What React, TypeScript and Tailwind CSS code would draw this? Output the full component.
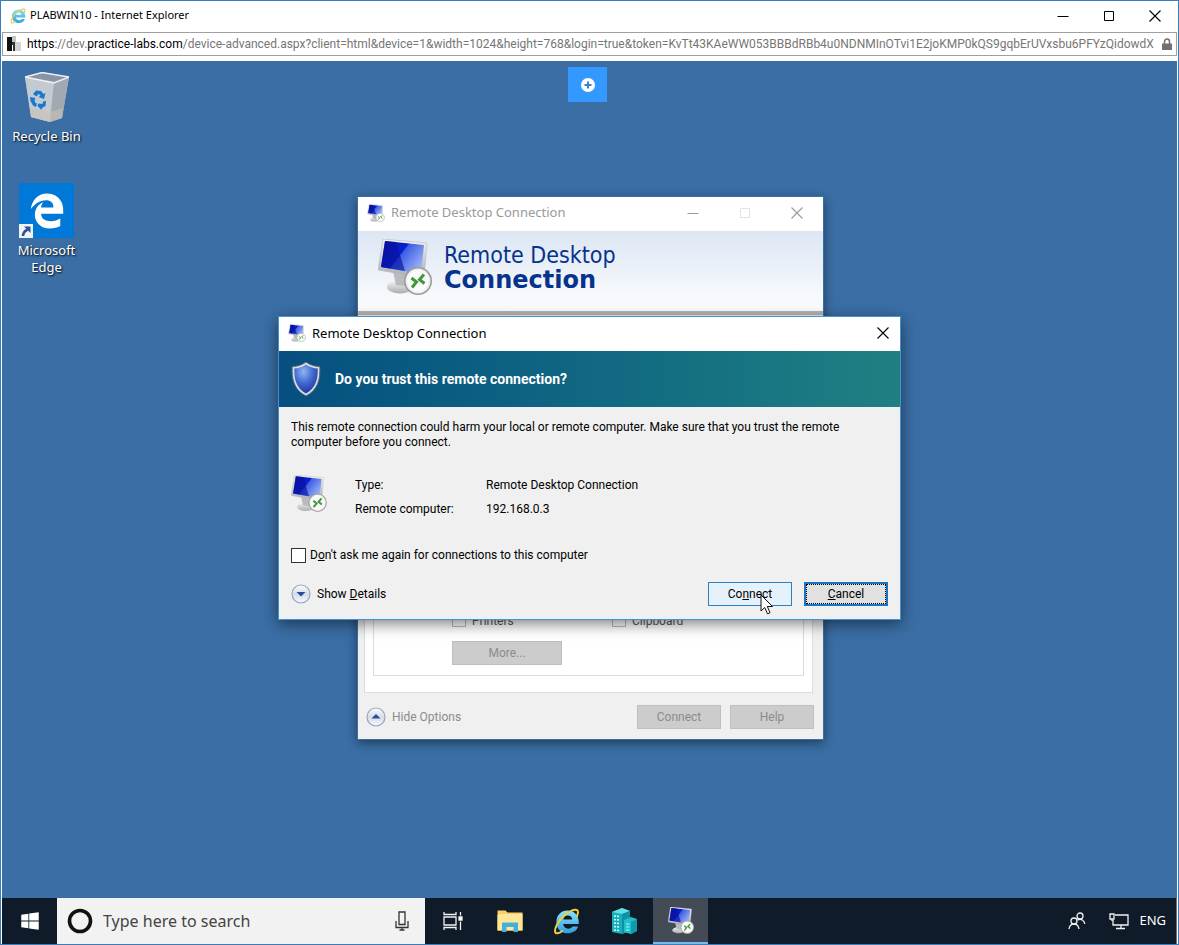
import React from 'react';
import { FaEdgeLegacy, FaWindows } from 'react-icons/fa';

const UI_FONT = "font-['Noto_Sans','Open_Sans',sans-serif]";
const DIALOG_FONT = "font-[Roboto,'Liberation_Sans',sans-serif]";

const RdcIcon: React.FC<{ id: string; className?: string }> = ({ id, className }) => (
  <svg viewBox="0 0 54 56" className={className} aria-hidden="true">
    <defs>
      <linearGradient id={`${id}-screen`} x1="0" y1="0.2" x2="1" y2="0.8">
        <stop offset="0" stopColor="#0a12a8" />
        <stop offset="0.42" stopColor="#0a20cf" />
        <stop offset="0.44" stopColor="#3c5ce4" />
        <stop offset="1" stopColor="#a9bdf8" />
      </linearGradient>
      <linearGradient id={`${id}-metal`} x1="0" y1="0" x2="0" y2="1">
        <stop offset="0" stopColor="#f4f4f4" />
        <stop offset="1" stopColor="#a9adb1" />
      </linearGradient>
    </defs>
    <ellipse cx="22" cy="48" rx="13" ry="6.5" fill={`url(#${id}-metal)`} />
    <path d="M15 33 L31 36 L28 47 L18 46 Z" fill="#b9bcbf" />
    <path d="M5 0 L49 4 L46 39 L0 31 Z" fill={`url(#${id}-metal)`} stroke="#b4b8bc" strokeWidth="0.6" />
    <path d="M7 2 L46 6 L43 35 L3 28 Z" fill={`url(#${id}-screen)`} />
    <path d="M7 2 L18 3 L27 32 L3 28 Z" fill="#0712a0" opacity="0.65" />
    <circle cx="40" cy="42" r="13.2" fill="#f1f1f1" stroke="#9c9c9c" strokeWidth="1.6" />
    <circle cx="40" cy="42" r="10.6" fill="#fff" opacity="0.7" />
    <path d="M33.5 39 L38.5 43 L34 48.5" fill="none" stroke="#3d9a3a" strokeWidth="3" />
    <path d="M46 35.5 L41.5 40.5 L46.5 44.5" fill="none" stroke="#3d9a3a" strokeWidth="3" />
  </svg>
);

const IeIcon: React.FC<{ id: string; className?: string }> = ({ id, className }) => (
  <svg viewBox="0 0 32 32" className={className} aria-hidden="true">
    <defs>
      <linearGradient id={id} x1="0" y1="0" x2="0" y2="1">
        <stop offset="0" stopColor="#8be3fb" />
        <stop offset="1" stopColor="#2f9fdf" />
      </linearGradient>
    </defs>
    <path
      fill={`url(#${id})`}
      fillRule="evenodd"
      d="M17 3 C25 3 30.5 8.500 30.5 16.500 V19 H12 C12.500 22.500 15 24.500 18 24.500 C20.500 24.500 22.300 23.500 23.200 22 H29.800 C28 27.500 23 30 17.300 30 C10 30 4 25 4 16.500 C4 8.500 10 3 17 3 Z M12.200 13.500 H22.800 C22.500 10.500 20.500 9 17.500 9 C14.500 9 12.600 10.500 12.200 13.500 Z"
    />
    <path
      d="M28.500 9.500 C30.500 5 30 1.500 26 2 C19 3 9 11 4.500 20 C1.500 26 1.500 30.500 5.500 30 C7.500 29.700 9.500 28.500 11 27.300"
      fill="none"
      stroke="#f1cd3e"
      strokeWidth="2.4"
      strokeLinecap="round"
    />
  </svg>
);

const RecycleBinIcon = () => (
  <svg viewBox="0 0 44 50" className="h-[50px] w-11" aria-hidden="true">
    <path d="M0 5 L17 0 L44 5 L37 46 L25 50 L6 45 Z" fill="#aeb5bd" />
    <path d="M0 5 L29 11 L25 50 L6 45 Z" fill="#c3cad2" />
    <path d="M29 11 L44 5 L37 46 L25 50 Z" fill="#a2a9b1" />
    <path d="M6 37 L25 40 L38 36 L37 46 L25 50 L6 45 Z" fill="#c9c1b2" opacity="0.6" />
    <path d="M2 5 L17 1 L42 5 L29 9.500 Z" fill="#8795a5" />
    <path d="M0 5 L17 0.500 L44 5 L29 11 Z" fill="none" stroke="#eef1f4" strokeWidth="1.3" />
    <g fill="#1679cf">
      <path d="M8 22 L11 18.500 L16 19 L18.500 22 L20.500 21 L19 27 L13.500 25 L15.500 23.800 L13.500 21.800 L11.500 24.500 Z" />
      <path d="M5 25 L10.500 26 L9.500 28 L10.500 31 L12 31.500 L11 35 L8 33.500 L5.500 29 Z" />
      <path d="M13.500 31.500 L17.500 32 L18 29.500 L21 29 L20.500 34 L17 36 L16.500 38 L12.500 34 Z" />
    </g>
  </svg>
);

const ShieldIcon = () => (
  <svg viewBox="0 0 30 36" className="h-9 w-[30px]" aria-hidden="true">
    <defs>
      <radialGradient id="shield" cx="0.4" cy="0.25" r="0.8">
        <stop offset="0" stopColor="#8fb4f6" />
        <stop offset="0.5" stopColor="#4169d0" />
        <stop offset="1" stopColor="#1b2f9c" />
      </radialGradient>
    </defs>
    <path
      d="M15 1 C11 4 6 5.500 1.200 5.500 C0.500 18 3 29 15 35 C27 29 29.500 18 28.800 5.500 C24 5.500 19 4 15 1 Z"
      fill="#d8dde2"
      stroke="#56677a"
      strokeWidth="1"
    />
    <path d="M15 3.500 C11.500 6 7.500 7.300 3.300 7.600 C3 18 5 27 15 32.500 C25 27 27 18 26.700 7.600 C22.500 7.300 18.500 6 15 3.500 Z" fill="url(#shield)" />
  </svg>
);

const ExpandIcon: React.FC<{ up?: boolean }> = ({ up }) => (
  <svg viewBox="0 0 20 20" className="size-5" aria-hidden="true">
    <defs>
      <linearGradient id={up ? 'expand-up' : 'expand-down'} x1="0" y1="0" x2="0" y2="1">
        <stop offset="0" stopColor="#fdfdfe" />
        <stop offset="0.5" stopColor="#d3dde8" />
        <stop offset="1" stopColor="#f6f9fc" />
      </linearGradient>
    </defs>
    <circle cx="10" cy="10" r="9" fill={up ? 'url(#expand-up)' : 'url(#expand-down)'} stroke="#98a6bd" strokeWidth="1.2" />
    <path d={up ? 'M5.500 11.500 L10 7 L14.500 11.500 Z' : 'M5.500 8 H14.500 L10 12.500 Z'} fill="#2c4a9a" />
  </svg>
);

const CloseGlyph = () => (
  <svg viewBox="0 0 12 12" className="size-3" stroke="currentColor" strokeWidth="1.1" aria-hidden="true">
    <path d="M0.500 0.500 L11.500 11.500 M11.500 0.500 L0.500 11.500" />
  </svg>
);

const MinimizeGlyph = () => (
  <svg viewBox="0 0 12 12" className="size-3" stroke="currentColor" aria-hidden="true">
    <path d="M0.500 6.500 H11.500" />
  </svg>
);

const MaximizeGlyph = () => (
  <svg viewBox="0 0 12 12" className="size-3" stroke="currentColor" fill="none" aria-hidden="true">
    <path d="M1.500 1.500 H10.500 V10.500 H1.500 Z" />
  </svg>
);

const BrowserChrome = () => (
  <header className="bg-white pb-[5px]">
    <div className="flex h-[31px] items-center pb-0.5 pl-2">
      <IeIcon id="ie-title" className="size-4" />
      <h1 className={`ml-1 flex-1 text-[11px] text-black ${UI_FONT}`}>PLABWIN10 - Internet Explorer</h1>
      <div className="flex text-black">
        <button aria-label="Minimize" className="flex w-[46px] items-center justify-center"><MinimizeGlyph /></button>
        <button aria-label="Maximize" className="flex w-[46px] items-center justify-center"><MaximizeGlyph /></button>
        <button aria-label="Close" className="flex w-[46px] items-center justify-center"><CloseGlyph /></button>
      </div>
    </div>
    <div className="mr-px flex h-6 items-center border border-[#a0a0a0] bg-white pr-1 pl-1">
      <svg viewBox="0 0 14 16" className="h-4 w-3.5 shrink-0" aria-hidden="true">
        <path d="M0 1 H5 V15 H0 Z" fill="#111" />
        <path d="M5 0 H9 V6 H5 Z" fill="#c4c4c4" />
        <path d="M5 6 H8 V15 H6 V9 H5 Z" fill="#333" />
        <path d="M8 6 H14 V15 H8 Z" fill="#d3d3d3" />
      </svg>
      <p className="ml-1.5 min-w-0 flex-1 overflow-hidden font-[Roboto,sans-serif] text-[12px] whitespace-nowrap text-[#767676]">
        <span className="text-black">https</span>://dev.<span className="text-black">practice-labs.com</span>
        /device-advanced.aspx?client=html&amp;device=1&amp;width=1024&amp;height=768&amp;login=true&amp;token=KvTt43KAeWW053BBBdRBb4u0NDNMInOTvi1E2joKMP0kQS9gqbErUVxsbu6PFYzQidowdX
      </p>
      <svg viewBox="0 0 10 12" className="ml-1.5 h-3 w-2.5 shrink-0" aria-hidden="true">
        <path d="M2.500 6 V3.500 A2.500 2.500 0 0 1 7.500 3.500 V6" fill="none" stroke="#707070" strokeWidth="1.5" />
        <path d="M0 5.500 H10 V12 H0 Z" fill="#707070" />
      </svg>
    </div>
  </header>
);

const DesktopIcons = () => (
  <nav className={`flex w-[89px] flex-col pt-[11px] text-[13px] leading-[17px] text-white ${UI_FONT}`}>
    <button className="flex flex-col items-center gap-1.5">
      <RecycleBinIcon />
      <span className="[text-shadow:1px_1px_2px_#000]">Recycle Bin</span>
    </button>
    <button className="mt-[38px] flex flex-col items-center gap-1">
      <span className="relative flex size-[55px] items-center justify-center bg-[#0078d7]">
        <FaEdgeLegacy className="size-9" />
        <svg viewBox="0 0 14 14" className="absolute bottom-0 left-0 size-3.5" aria-hidden="true">
          <path d="M0 0 H14 V14 H0 Z" fill="#f2f2f2" />
          <path d="M5 2.500 H11.500 V9 L9.300 6.800 C6.800 8 5.500 9.500 5.300 12 H2.700 C2.700 8.500 4.500 6.200 7.200 4.700 Z" fill="#28549a" />
        </svg>
      </span>
      <span className="w-16 [text-shadow:1px_1px_2px_#000]">Microsoft Edge</span>
    </button>
  </nav>
);

const GreyButton: React.FC<{ label: string; className: string }> = ({ label, className }) => (
  <button disabled className={`h-6 border border-[#bfbfbf] bg-[#cccccc] text-[#8b8b8b] ${className}`}>
    {label}
  </button>
);

const OptionsWindow = () => (
  <section
    aria-label="Remote Desktop Connection options"
    className={`absolute top-[135px] left-[355px] flex h-[544px] w-[467px] flex-col border border-[#3a6f9f] bg-[#f0f0f0] text-[12px] text-[#8b8b8b] shadow-[0_3px_10px_rgba(0,0,0,0.45)] ${DIALOG_FONT}`}
  >
    <div className="flex h-[34px] items-center bg-white pb-0.5 pl-[9px]">
      <RdcIcon id="rdc-options" className="size-[18px]" />
      <h2 className={`ml-1.5 flex-1 text-[13px] text-[#999] ${UI_FONT}`}>Remote Desktop Connection</h2>
      <button aria-label="Minimize" className="flex w-[52px] justify-center text-[#999]"><MinimizeGlyph /></button>
      <button aria-label="Maximize" disabled className="flex w-[52px] justify-center text-[#e2e2e2]"><MaximizeGlyph /></button>
      <button aria-label="Close" className="flex w-[52px] justify-center text-[#999]"><CloseGlyph /></button>
    </div>
    <div className="flex h-[84px] items-start border-b-4 border-[#b5b5b5] bg-linear-to-b from-[#dce6f3] to-[#fdfdfe] pt-2 pl-5">
      <RdcIcon id="rdc-banner" className="h-14 w-[54px]" />
      <p className="mt-1 ml-3 font-['DejaVu_Sans_Condensed','DejaVu_Sans',sans-serif] text-[23px] leading-[25px] text-[#06338c]">
        Remote Desktop
        <b className="block font-['DejaVu_Sans',sans-serif] text-[24px]">Connection</b>
      </p>
    </div>
    <div className="mr-2.5 ml-1.5 mt-2 flex flex-1 flex-col border border-[#dcdcdc] bg-white px-2 pb-4">
      <div className="mt-2 flex flex-1 flex-col justify-end border border-[#dcdcdc] pb-2.5 pl-[78px]">
        <div className="mb-3.5 flex items-end text-[#555]">
          <label className="flex w-40 items-end gap-1.5">
            <input type="checkbox" disabled className="size-3.5 appearance-none border border-[#bbb]" />
            <span className="leading-3">Printers</span>
          </label>
          <label className="flex items-end gap-1.5">
            <input type="checkbox" disabled className="size-3.5 appearance-none border border-[#bbb]" />
            <span className="leading-3">Clipboard</span>
          </label>
        </div>
        <GreyButton label="More..." className="w-[110px]" />
      </div>
    </div>
    <div className="flex items-center pt-3 pr-[9px] pb-2.5 pl-2">
      <button className="flex items-center gap-1.5">
        <ExpandIcon up />
        Hide Options
      </button>
      <GreyButton label="Connect" className="ml-auto w-[84px]" />
      <GreyButton label="Help" className="ml-[9px] w-[84px]" />
    </div>
  </section>
);

const TrustDialog = () => (
  <section
    role="dialog"
    aria-label="Remote Desktop Connection"
    className={`absolute top-[255px] left-[276px] w-[623px] border border-[#3f94d1] bg-[#f0f0f0] text-[12px] leading-[15px] text-black shadow-[0_4px_14px_rgba(0,0,0,0.5)] ${DIALOG_FONT}`}
  >
    <div className="flex h-[34px] items-center bg-white pb-0.5 pl-[9px]">
      <RdcIcon id="rdc-dialog" className="size-[18px]" />
      <h2 className={`ml-1.5 flex-1 text-[13px] ${UI_FONT}`}>Remote Desktop Connection</h2>
      <button aria-label="Close" className="flex w-[34px] justify-center"><CloseGlyph /></button>
    </div>
    <div className="flex h-14 items-center bg-linear-to-r from-[#064f80] to-[#1f8082] pl-3 text-white">
      <ShieldIcon />
      <h3 className="ml-3.5 text-[14px] font-bold">Do you trust this remote connection?</h3>
    </div>
    <div className="px-3 pt-[13px] pb-[13px]">
      <p className="w-[570px] max-w-full">
        This remote connection could harm your local or remote computer. Make sure that you trust the remote computer before you connect.
      </p>
      <div className="mt-6 flex h-[38px]">
        <RdcIcon id="rdc-type" className="mt-px h-[37px] w-9" />
        <dl className="mt-1 ml-7 grid grid-cols-[131px_auto] content-start gap-y-[9px]">
          <dt>Type:</dt>
          <dd>Remote Desktop Connection</dd>
          <dt>Remote computer:</dt>
          <dd>192.168.0.3</dd>
        </dl>
      </div>
      <label className="mt-9 flex items-center gap-1">
        <input type="checkbox" className="size-[15px] appearance-none border border-[#333] bg-white" />
        <span>D<u>o</u>n't ask me again for connections to this computer</span>
      </label>
      <div className="mt-[19px] flex items-center">
        <button className="flex items-center gap-1.5">
          <ExpandIcon />
          <span>Show <u>D</u>etails</span>
        </button>
        <button className="ml-auto h-6 w-[84px] border border-[#2b80c5] bg-[#e5f1fb]">
          Co<u>n</u>nect
        </button>
        <button className="ml-3 h-6 w-[84px] border-2 border-[#1a76c4] bg-[#e1e1e1] outline outline-dotted -outline-offset-3 outline-black">
          <u>C</u>ancel
        </button>
      </div>
    </div>
  </section>
);

const Cursor = () => (
  <svg viewBox="0 0 14 21" className="absolute top-[533px] left-[758px] h-[21px] w-3.5" aria-hidden="true">
    <path d="M1 1 V17 L4.700 13.500 L7.500 19.800 L10 18.700 L7.300 12.500 H12.500 Z" fill="#fff" stroke="#111" strokeWidth="1" />
  </svg>
);

const taskButton = 'flex h-full w-[55px] items-center justify-center';

const Taskbar = () => (
  <footer className={`flex h-[46px] bg-[#0f1b28] text-white ${UI_FONT}`}>
    <button aria-label="Start" className={taskButton}>
      <FaWindows className="size-5" />
    </button>
    <div className="flex w-[368px] items-center bg-[#f2f2f2] px-2.5">
      <svg viewBox="0 0 26 26" className="size-[26px]" aria-hidden="true">
        <circle cx="13" cy="13" r="10.500" fill="none" stroke="#111" strokeWidth="3.600" />
      </svg>
      <input
        type="text"
        aria-label="Search"
        placeholder="Type here to search"
        className="ml-2.5 min-w-0 flex-1 bg-transparent text-[16px] text-black outline-none placeholder:text-[#444]"
      />
      <button aria-label="Voice search" className="px-1.5">
        <svg viewBox="0 0 14 20" className="h-5 w-3.5" fill="none" stroke="#333" strokeWidth="1.3" aria-hidden="true">
          <path d="M4 1 H10 V13.500 H4 Z M1 10 V16.500 H13 V10 M7 16.500 V19 M4.500 19 H9.500" />
        </svg>
      </button>
    </div>
    <div className="flex gap-0.5">
      <button aria-label="Task View" className={taskButton}>
        <svg viewBox="0 0 20 18" className="h-[18px] w-5" fill="none" stroke="#f2f2f2" strokeWidth="1.300" aria-hidden="true">
          <path d="M1 5 H13 V13 H1 Z M1 0 V2.500 H13 V0 M1 18 V15.500 H13 V18 M17.500 0 V3.500 M17.500 9.500 V18" />
          <path d="M16 5 H19 V8 H16 Z" fill="#fff" />
        </svg>
      </button>
      <button aria-label="File Explorer" className={taskButton}>
        <svg viewBox="0 0 26 22" className="h-[22px] w-[26px]" aria-hidden="true">
          <path d="M0.500 0.500 H8.500 L10.500 2.500 H25.500 V20.500 H0.500 Z" fill="#f7cf62" />
          <path d="M2 4 H25.500 V20.500 H0.500 V5 Z" fill="#ffe79a" />
          <path d="M5 22 V12.500 H21 V22 H16.500 V17 H9.500 V22 Z" fill="#45afd9" />
        </svg>
      </button>
      <button aria-label="Internet Explorer" className={taskButton}>
        <IeIcon id="ie-task" className="size-[27px]" />
      </button>
      <button aria-label="Server Manager" className={taskButton}>
        <svg viewBox="0 0 26 26" className="size-[26px]" aria-hidden="true">
          <path d="M1 4 L11 0 L19 3 V23 L11 26 L1 24 Z" fill="#19aebb" />
          <path d="M1 4 L11 0 L19 3 L11 6 Z" fill="#62e0e6" />
          <path d="M11 6 L19 3 V23 L11 26 Z" fill="#0d93a3" />
          <path d="M3 8 L9 8.500 M3 11.500 L9 12 M3 15 L9 15.500 M3 18.500 L9 19 M3 22 L9 22.500" stroke="#dff" strokeWidth="1.500" strokeDasharray="2 1" />
          <path d="M13 12 L20 9 L26 11 V23 L20 26 L13 24 Z" fill="#22bfc9" />
          <path d="M20 14 L26 11 V23 L20 26 Z" fill="#0f9baa" />
          <path d="M15 16 H18.500 M15 19 H18.500 M15 22 H18.500" stroke="#9ff" strokeWidth="1" />
        </svg>
      </button>
      <button aria-label="Remote Desktop Connection" className={`${taskButton} border-b-2 border-[#76b9ed] bg-[#434b56]`}>
        <RdcIcon id="rdc-task" className="h-[27px] w-[26px]" />
      </button>
    </div>
    <div className="ml-auto flex items-center border-r border-[#6b747d] pr-2.5">
      <svg viewBox="0 0 18 18" className="size-[18px]" fill="none" stroke="#f2f2f2" strokeWidth="1.300" aria-hidden="true">
        <circle cx="12" cy="4" r="3" />
        <circle cx="6" cy="9" r="3" />
        <path d="M1 17 C1.500 13.500 3.500 12 6 12 C8.500 12 10.500 13.500 11 17 M9.500 8 C13 6 16.500 8.500 16.800 12" />
      </svg>
      <svg viewBox="0 0 20 18" className="ml-[23px] h-[18px] w-5" fill="none" stroke="#f2f2f2" strokeWidth="1.300" aria-hidden="true">
        <path d="M6 3 H19 V13 H4 V8 M12 13 V16.500 M7 16.500 H16" />
        <path d="M1 2 H5 V7 H1 Z M3 7 V9" />
      </svg>
      <span className="ml-2.5 text-[13px]">ENG</span>
    </div>
  </footer>
);

export default function App() {
  return (
    <div className="flex min-h-screen flex-col border border-[#3a7db8] bg-white pl-px">
      <BrowserChrome />
      <main className="mr-px flex flex-1 flex-col bg-[#3a6ea5]">
        <div className="relative min-h-[700px] flex-1 overflow-hidden">
          <DesktopIcons />
          <button aria-label="Open toolbar" className="absolute top-1.5 left-[566px] flex h-[35px] w-[39px] items-center justify-center bg-[#3399ff]">
            <svg viewBox="0 0 14 14" className="size-3.5" aria-hidden="true">
              <circle cx="7" cy="7" r="7" fill="#fff" />
              <path d="M7 3.500 V10.500 M3.500 7 H10.500" stroke="#3583d6" strokeWidth="2" />
            </svg>
          </button>
          <OptionsWindow />
          <TrustDialog />
          <Cursor />
        </div>
        <Taskbar />
      </main>
    </div>
  );
}
